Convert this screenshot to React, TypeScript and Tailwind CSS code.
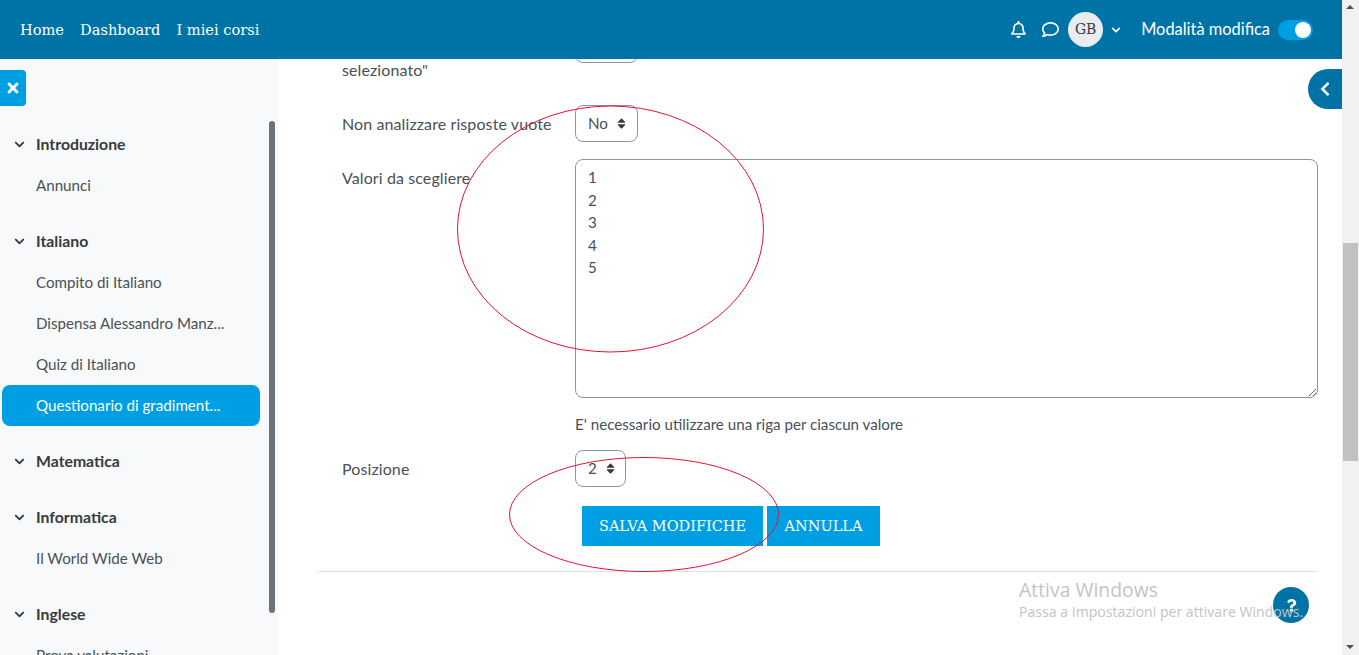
import { FaRegBell, FaRegComment, FaChevronDown, FaTimes, FaChevronLeft, FaQuestion, FaSort } from "react-icons/fa";

const sections = [
  { title: "Introduzione", items: ["Annunci"] },
  { title: "Italiano", items: ["Compito di Italiano", "Dispensa Alessandro Manz...", "Quiz di Italiano", "Questionario di gradiment..."] },
  { title: "Matematica", items: [] as string[] },
  { title: "Informatica", items: ["Il World Wide Web"] },
  { title: "Inglese", items: ["Prova valutazioni"] },
];

function Select({ value, className }: { value: string; className: string }) {
  return (
    <div className={`flex items-center h-[37px] pl-[12px] gap-[7px] border border-[#8f959e] rounded-[8px] text-[#495057] ${className}`}>
      <span>{value}</span>
      <FaSort className="text-[#343a40] text-[13px]" />
    </div>
  );
}

export default function App() {
  return (
    <div className="relative flex h-[655px] w-[1359px] overflow-hidden bg-white text-[15.15px] leading-[22.5px] text-[#495057] font-['Lato','Open_Sans',sans-serif]">
      <div className="flex flex-col w-[1342px] h-full">
        <header className="flex items-center h-[59px] shrink-0 bg-[#0073a6] text-white pl-[20px] pr-[29px]">
          <nav className="flex gap-[16px] pt-[1px] font-['DejaVu_Serif',serif] text-[14.6px]">
            <span>Home</span>
            <span>Dashboard</span>
            <span>I miei corsi</span>
          </nav>
          <div className="ml-auto flex items-center">
            <FaRegBell className="text-[17px] mr-[15px]" />
            <FaRegComment className="text-[17px] mr-[9px]" />
            <div className="flex items-center justify-center w-[35px] h-[35px] rounded-full bg-[#e9ecef] text-[#373a3c] font-['DejaVu_Serif',serif] text-[14px]">GB</div>
            <FaChevronDown className="text-[10px] ml-[8px] mr-[20px]" />
            <span className="mr-[8px] text-[16.4px]">Modalità modifica</span>
            <div className="flex items-center justify-end w-[35px] h-[20px] rounded-full bg-[#009fe3] pr-[2px]">
              <div className="w-[16px] h-[16px] rounded-full bg-white" />
            </div>
          </div>
        </header>
        <div className="flex flex-1 min-h-0">
          <aside className="w-[278px] shrink-0 bg-[#f8f9fa] overflow-hidden pt-[65px]">
            {sections.map((s) => (
              <div key={s.title} className="mb-[15px]">
                <div className="flex items-center h-[41px] pl-[14px] font-bold text-[#373a3c]">
                  <FaChevronDown className="text-[11px] text-[#343a40] mr-[11px]" />
                  <span className="text-[15.8px]">{s.title}</span>
                </div>
                {s.items.map((it) => {
                  const active = it.startsWith("Questionario");
                  return (
                    <div key={it} className={active ? "flex items-center h-[41px] ml-[2px] w-[258px] pl-[34px] rounded-[8px] bg-[#009fe3] text-white" : "flex items-center h-[41px] pl-[36px]"}>
                      {it}
                    </div>
                  );
                })}
              </div>
            ))}
          </aside>
          <main className="flex-1 min-w-0 overflow-hidden pl-[39px] pr-[24px]">
            <div className="-mt-[33px] pl-[25px]">
              <div className="flex h-[79px]">
                <div className="w-[233px] pt-[10px] text-[16px] tracking-[0.1px]">Mostra risposte "non<br />selezionato"</div>
                <Select value="No" className="w-[63px]" />
              </div>
              <div className="flex items-center h-[36px] mb-[18px]">
                <div className="w-[233px] pt-[2px] text-[16px] tracking-[0.1px]">Non analizzare risposte vuote</div>
                <Select value="No" className="w-[63px]" />
              </div>
              <div className="flex">
                <div className="w-[233px] pt-[8px] text-[16px] tracking-[0.1px]">Valori da scegliere</div>
                <textarea
                  readOnly
                  defaultValue={"1\n2\n3\n4\n5"}
                  className="block w-[743px] h-[239px] px-[12px] py-[6px] border border-[#8f959e] rounded-[8px] text-[#495057] outline-none"
                />
              </div>
              <div className="ml-[233px] mt-[15px] mb-[14px]">E' necessario utilizzare una riga per ciascun valore</div>
              <div className="flex items-center">
                <div className="w-[233px] pt-[2px] text-[16px] tracking-[0.1px]">Posizione</div>
                <Select value="2" className="w-[51px]" />
              </div>
              <div className="flex gap-[4px] ml-[240px] mt-[19px] font-['DejaVu_Serif',serif] text-[14.5px] text-white">
                <div className="flex items-center justify-center w-[181px] h-[40px] pt-[1px] bg-[#009fe3]">SALVA MODIFICHE</div>
                <div className="flex items-center justify-center w-[113px] h-[40px] pt-[1px] bg-[#009fe3]">ANNULLA</div>
              </div>
            </div>
            <div className="mt-[25px] w-[1001px] border-t border-[#dee2e6]" />
          </main>
        </div>
      </div>

      <div className="relative w-[17px] h-full bg-[#f1f1f1]">
        <div className="absolute left-[1px] top-[243px] w-[15px] h-[218px] bg-[#c1c1c1]" />
        <div className="absolute left-[4px] top-[5px] w-0 h-0 border-x-[4px] border-x-transparent border-b-[4px] border-b-[#505050]" />
        <div className="absolute left-[4px] bottom-[6px] w-0 h-0 border-x-[4px] border-x-transparent border-t-[4px] border-t-[#505050]" />
      </div>

      <div className="absolute left-0 top-[70px] flex items-center justify-center w-[26px] h-[36px] rounded-r-[4px] bg-[#009fe3] text-white">
        <FaTimes className="text-[16px]" />
      </div>
      <div className="absolute left-[269px] top-[121px] w-[6px] h-[492px] rounded-[3px] bg-[#6a737b]" />
      <div className="absolute left-[1308px] top-[69px] flex items-center justify-center w-[34px] h-[40px] rounded-l-full bg-[#0073a6] text-white">
        <FaChevronLeft className="text-[16px]" />
      </div>

      <div className="absolute left-[1273px] top-[587px] flex items-center justify-center w-[36px] h-[36px] rounded-full bg-[#0073a6] text-white">
        <FaQuestion className="text-[13px]" />
      </div>
      <div className="absolute left-[1019px] top-[577px] text-[#c4c4c4] font-['Open_Sans',sans-serif]">
        <div className="text-[19.4px] leading-[25px]">Attiva Windows</div>
        <div className="text-[14.1px] leading-[20px] whitespace-nowrap">Passa a Impostazioni per attivare Windows.</div>
      </div>

      <svg className="absolute left-0 top-0 pointer-events-none" width="1359" height="655" fill="none" stroke="#e8112d" strokeWidth="1">
        <ellipse cx="610.5" cy="229" rx="153" ry="123" />
        <ellipse cx="644" cy="514.5" rx="134.5" ry="57" />
      </svg>
    </div>
  );
}
